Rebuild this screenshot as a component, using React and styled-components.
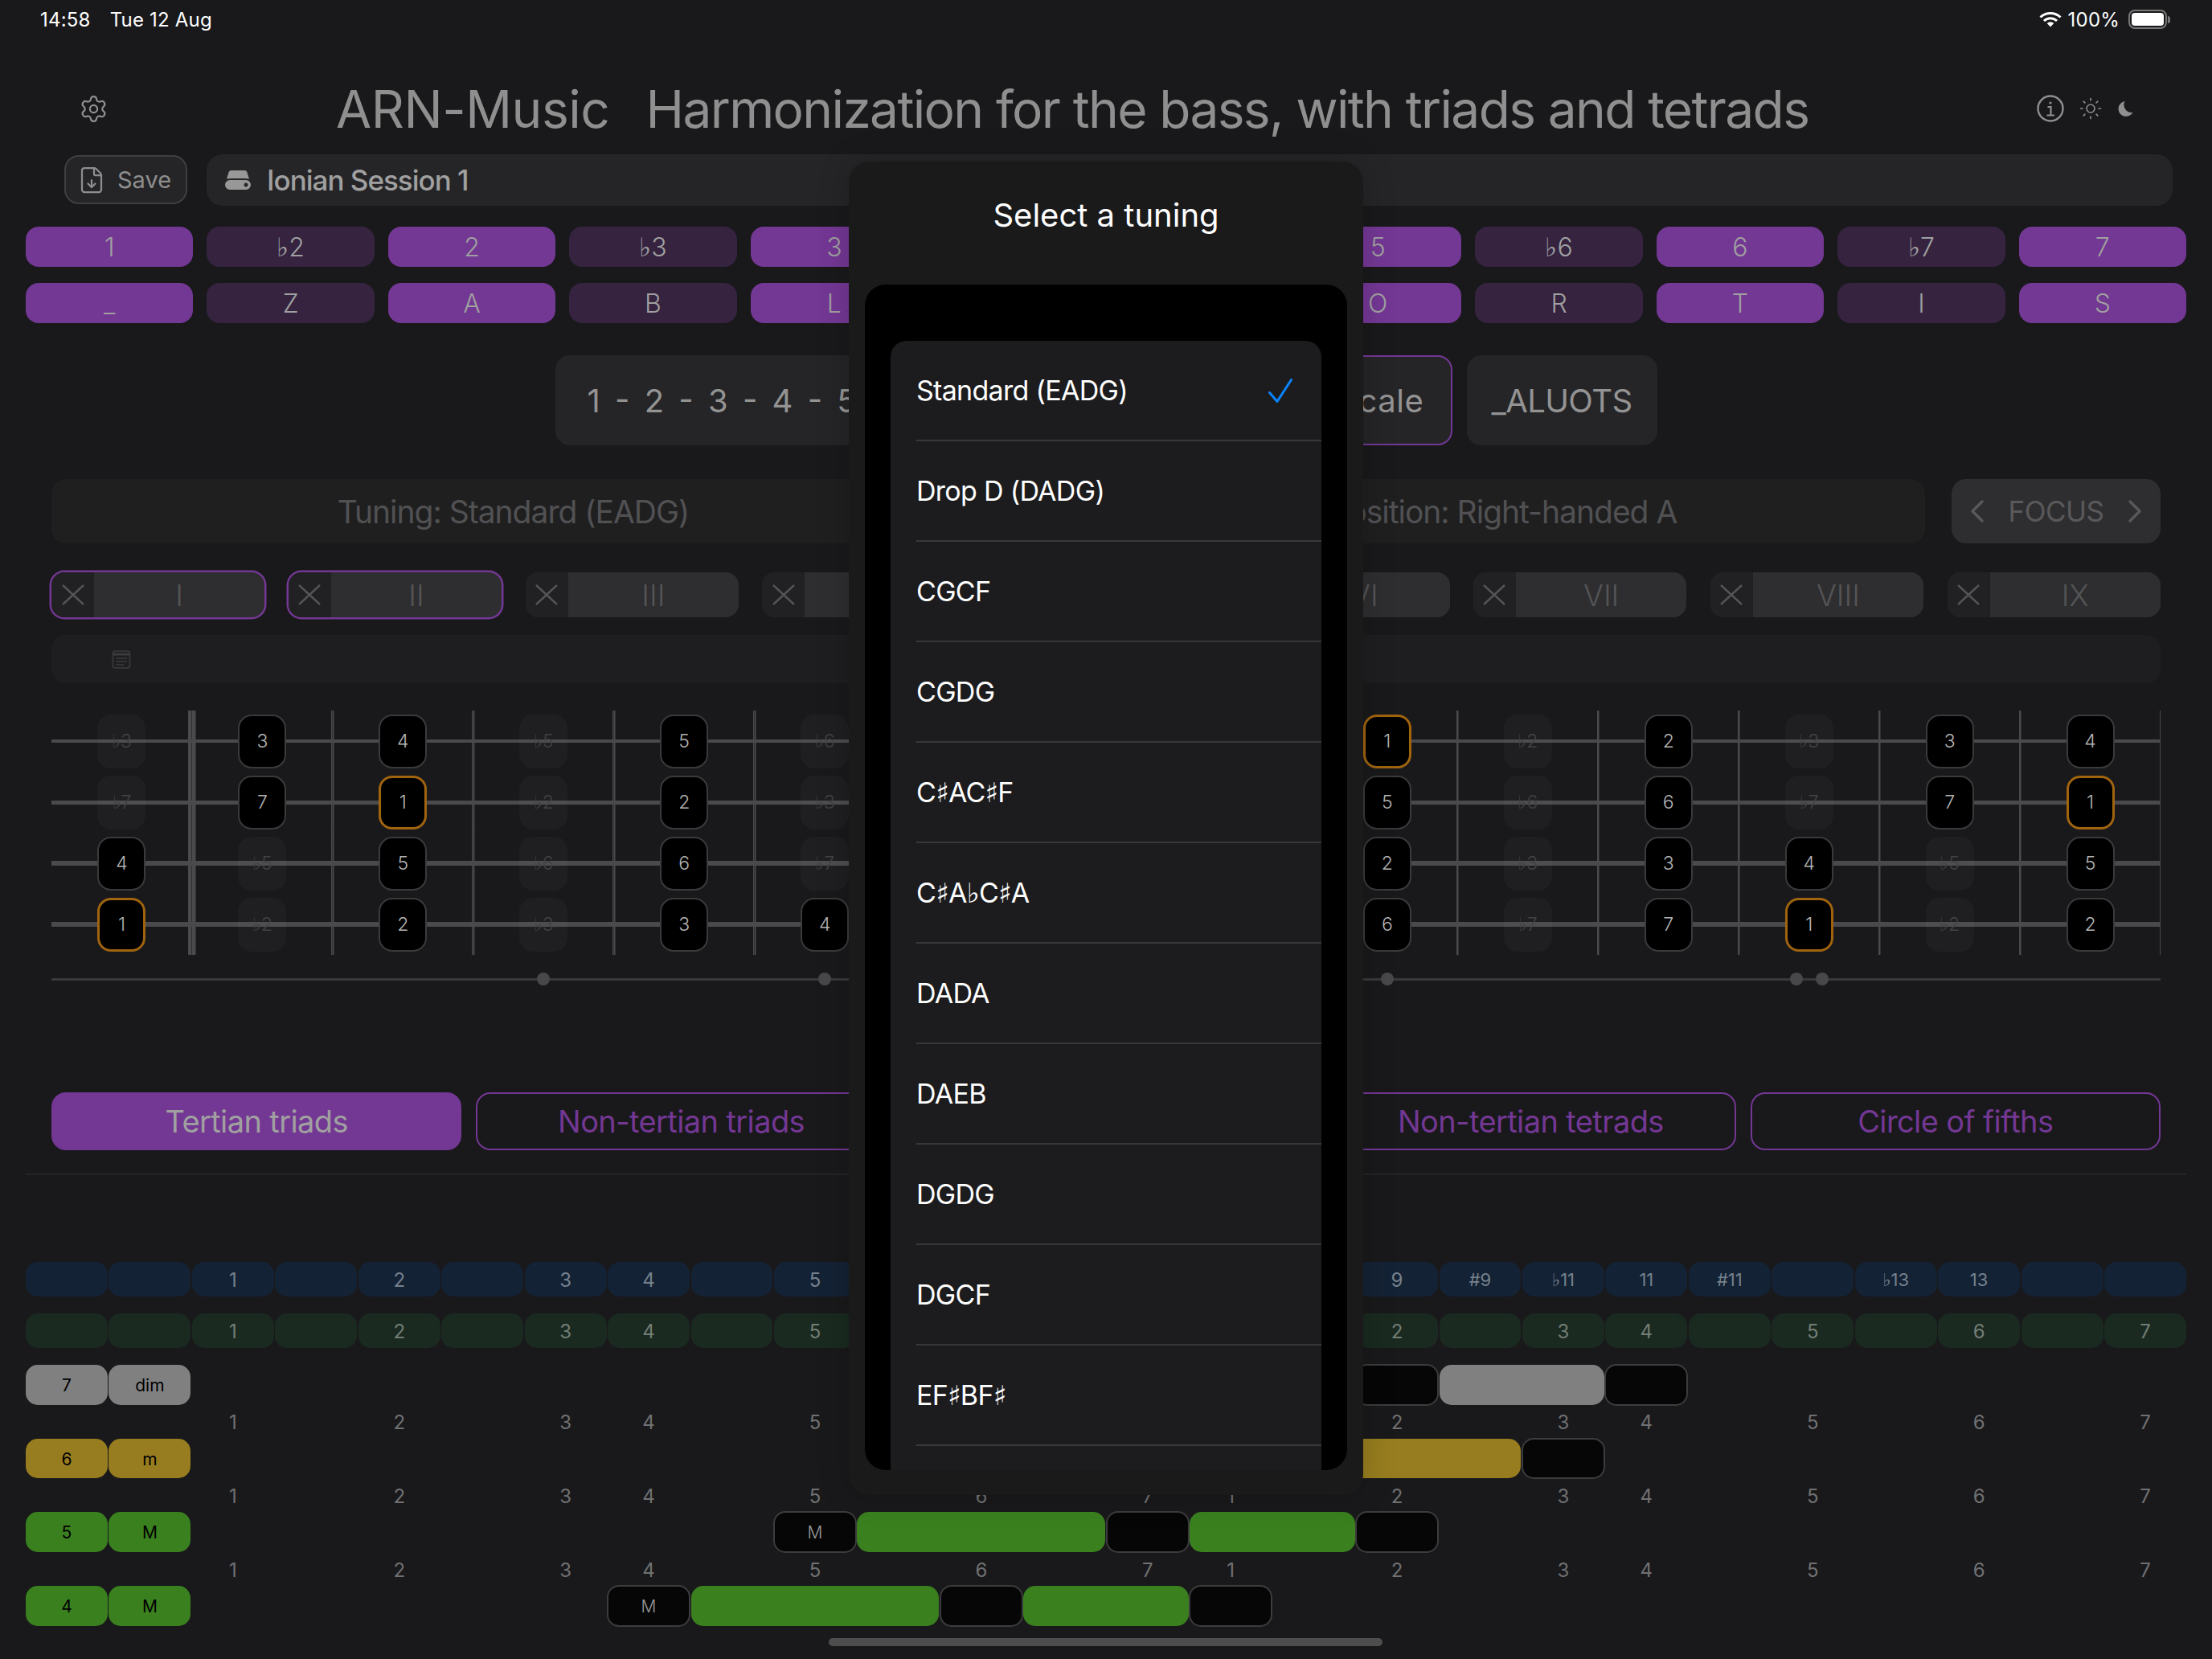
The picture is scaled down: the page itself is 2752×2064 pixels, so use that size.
import React from 'react';
import styled, { createGlobalStyle } from 'styled-components';
import { Settings, FileDown, Sun } from 'lucide-react';

const FONT = `Inter, "Noto Sans", "DejaVu Sans", sans-serif`;
const PURPLE = '#733794';

const Global = createGlobalStyle`
  html, body { margin: 0; padding: 0; background: #19191b; }
  * { box-sizing: border-box; }
  #root { width: 2752px; height: 2064px; overflow: hidden; }
`;

const Page = styled.div`
  position: relative;
  width: 2752px;
  height: 2064px;
  background: #19191b;
  font-family: ${FONT};
  display: flex;
  flex-direction: column;
  overflow: hidden;
`;

const StatusBar = styled.div`
  height: 48px;
  padding: 0 52px 0 50px;
  display: flex;
  align-items: center;
  justify-content: space-between;
  color: #fff;
  font-size: 24px;
  letter-spacing: 0.2px;
`;
const StatusLeft = styled.div`
  display: flex;
  gap: 24px;
`;
const StatusRight = styled.div`
  display: flex;
  align-items: center;
  gap: 8px;
`;
const Battery = styled.div`
  width: 48px;
  height: 24px;
  border: 2px solid #777;
  border-radius: 8px;
  padding: 2px;
  margin-left: 3px;
  display: flex;
  &::before { content: ''; flex: 1; background: #fff; border-radius: 4px; }
`;
const BatteryNub = styled.div`
  width: 3px;
  height: 9px;
  background: #777;
  border-radius: 0 3px 3px 0;
  margin-left: -7px;
`;

const Header = styled.header`
  height: 74px;
  margin-top: 50px;
  padding: 0 98px;
  display: flex;
  align-items: center;
  color: #8f8f8f;
`;
const GearSlot = styled.div`
  width: 37px;
  display: flex;
  justify-content: center;
`;
const Title = styled.h1`
  margin: 0 0 0 283px;
  font-weight: 400;
  font-size: 64px;
  display: flex;
  gap: 45px;
  white-space: nowrap;
`;
const TitleBrand = styled.span`
  letter-spacing: -0.45px;
`;
const TitleText = styled.span`
  letter-spacing: -1.63px;
`;
const HeaderIcons = styled.div`
  margin-left: auto;
  display: flex;
  align-items: center;
  gap: 18px;
`;

const SessionRow = styled.div`
  margin-top: 20px;
  padding: 0 49px 0 80px;
  display: flex;
  gap: 24px;
  height: 64px;
`;
const SaveButton = styled.div`
  width: 153px;
  height: 61px;
  margin-top: 1px;
  border: 2px solid #3f3f41;
  border-radius: 18px;
  background: #252527;
  color: #8e8e8e;
  font-size: 29px;
  display: flex;
  align-items: center;
  padding-left: 14px;
  gap: 14px;
`;
const SessionBar = styled.div`
  flex: 1;
  background: #252527;
  border-radius: 20px;
  display: flex;
  align-items: center;
  padding-left: 23px;
  gap: 20px;
  color: #a0a0a0;
  font-size: 35px;
  font-weight: 500;
  letter-spacing: -1px;
`;

const ChipGrid = styled.div`
  display: grid;
  grid-template-columns: repeat(12, 1fr);
  column-gap: 17px;
  margin: ${p => p.$top}px 32px 0;
`;
const Chip = styled.div`
  height: 50px;
  border-radius: 16px;
  background: ${p => (p.$on ? PURPLE : '#352340')};
  color: #a0a0a0;
  font-size: 32px;
  font-weight: 300;
  display: flex;
  align-items: center;
  justify-content: center;
`;

const ScaleRow = styled.div`
  margin-top: 40px;
  display: flex;
  justify-content: center;
  align-items: center;
  height: 112px;
  gap: 18px;
`;
const ScaleBox = styled.div`
  width: ${p => p.$w}px;
  height: 112px;
  border-radius: 18px;
  background: #252527;
  color: #939393;
  font-size: 40px;
  letter-spacing: ${p => p.$ls || 0}px;
  word-spacing: ${p => p.$ws || 0}px;
  display: flex;
  align-items: center;
  padding: 0 ${p => p.$pad || 0}px;
  justify-content: ${p => p.$align || 'center'};
  border: ${p => (p.$sel ? `2px solid ${PURPLE}` : 'none')};
`;

const TuningRow = styled.div`
  margin: 42px 64px 0;
  display: flex;
  gap: 33px;
  height: 80px;
`;
const TuningBar = styled.div`
  width: ${p => (p.$w ? `${p.$w}px` : 'auto')};
  flex: ${p => (p.$w ? 'none' : 1)};
  padding-left: ${p => p.$pad || 0}px;
  background: #1f1f20;
  border-radius: 18px;
  color: #515153;
  font-size: 39px;
  letter-spacing: -1px;
  display: flex;
  align-items: center;
  justify-content: center;
`;
const FocusButton = styled.div`
  width: 260px;
  background: #2e2e30;
  border-radius: 18px;
  color: #59595b;
  font-size: 35px;
  letter-spacing: -0.5px;
  display: flex;
  align-items: center;
  justify-content: space-between;
  padding: 0 23px;
`;

const PositionRow = styled.div`
  margin: 36px 64px 0;
  display: grid;
  grid-template-columns: repeat(9, 1fr);
  column-gap: 29.4px;
`;
const Position = styled.div`
  height: 56px;
  border-radius: 16px;
  background: #2e2e30;
  color: #545456;
  display: flex;
  overflow: hidden;
  font-size: 37px;
  font-weight: 300;
  box-shadow: ${p => (p.$sel ? `0 0 0 2.5px ${PURPLE}` : 'none')};
`;
const PositionX = styled.div`
  width: 53px;
  background: #212123;
  display: flex;
  align-items: center;
  justify-content: center;
`;
const PositionName = styled.div`
  flex: 1;
  display: flex;
  align-items: center;
  justify-content: center;
`;

const InfoStrip = styled.div`
  margin: 22px 64px 0;
  height: 60px;
  background: #1e1e20;
  border-radius: 18px;
  display: flex;
  align-items: center;
  padding-left: 75px;
`;

const Fretboard = styled.div`
  margin: 34px 64px 0;
  display: grid;
  grid-template-columns: repeat(15, 1fr);
  grid-auto-rows: 76px;
`;
const FretCell = styled.div`
  display: flex;
  align-items: center;
  justify-content: center;
  background:
    linear-gradient(#4a4a4c, #4a4a4c) left / ${p => (p.$col === 0 ? 0 : p.$col === 1 ? 4.5 : 1.5)}px 100% no-repeat,
    linear-gradient(#4a4a4c, #4a4a4c) right / ${p => (p.$col === 0 ? 4.5 : 1.5)}px 100% no-repeat,
    linear-gradient(#4a4a4c, #4a4a4c) center / 100% ${p => p.$thick}px no-repeat;
`;
const Note = styled.div`
  width: 60px;
  height: 67px;
  border-radius: 17px;
  font-size: 23px;
  font-weight: 300;
  display: flex;
  align-items: center;
  justify-content: center;
  color: ${p => (p.$on ? '#b4b4b4' : '#424244')};
  background: ${p => (p.$on ? '#000' : 'rgba(255,255,255,0.028)')};
  border: ${p => (p.$root ? '3px solid #a0640f' : p.$on ? '2px solid #3a3a3c' : 'none')};
`;
const MarkerRow = styled.div`
  margin: 22px 64px 0;
  height: 16px;
  display: grid;
  grid-template-columns: repeat(15, 1fr);
  background: linear-gradient(#39393b, #39393b) center / 100% 3px no-repeat;
`;
const MarkerCell = styled.div`
  display: flex;
  justify-content: center;
  gap: 16px;
`;
const Dot = styled.div`
  width: 16px;
  height: 16px;
  border-radius: 50%;
  background: #48484a;
`;

const Tabs = styled.div`
  margin: 133px 64px 0;
  display: grid;
  grid-template-columns: repeat(5, 1fr);
  column-gap: 18px;
`;
const Tab = styled.div`
  height: 72px;
  border-radius: 18px;
  border: 2px solid ${PURPLE};
  background: ${p => (p.$on ? PURPLE : 'transparent')};
  color: ${p => (p.$on ? '#a0a0a0' : PURPLE)};
  font-size: 38px;
  letter-spacing: -0.6px;
  display: flex;
  align-items: center;
  justify-content: center;
`;
const Divider = styled.div`
  margin: 29px 32px 0;
  height: 2px;
  background: #252527;
`;

const Table = styled.div`
  margin: 108px 32px 0;
  display: flex;
  flex-direction: column;
`;
const TableRow = styled.div`
  display: grid;
  grid-template-columns: repeat(26, 1fr);
  grid-template-rows: 1fr;
  column-gap: 1.5px;
  height: ${p => p.$h}px;
  margin-bottom: ${p => p.$mb || 0}px;
`;
const RefCell = styled.div`
  border-radius: 15px;
  background: ${p => p.$bg};
  color: ${p => p.$fg};
  font-size: ${p => p.$size || 24}px;
  padding-top: 1px;
  display: flex;
  align-items: center;
  justify-content: center;
`;
const DegreeLabel = styled.div`
  grid-column: ${p => p.$col + 1};
  grid-row: 1;
  color: #707072;
  font-size: 24px;
  padding-top: 2px;
  display: flex;
  align-items: center;
  justify-content: center;
`;
const HeadCell = styled.div`
  grid-column: ${p => p.$col + 1};
  grid-row: 1;
  border-radius: 15px;
  background: ${p => p.$bg};
  color: #000;
  font-size: 21px;
  padding-top: 1px;
  display: flex;
  align-items: center;
  justify-content: center;
`;
const Span = styled.div`
  grid-column: ${p => p.$col + 1} / span ${p => p.$span};
  grid-row: 1;
  border-radius: 15px;
  background: ${p => p.$bg};
`;
const ToneCell = styled.div`
  grid-column: ${p => p.$col + 1};
  grid-row: 1;
  margin: -1px;
  border-radius: 15px;
  background: #060606;
  border: 2px solid #3c3c3e;
  color: #9a9a9a;
  font-size: 21px;
  font-weight: 300;
  padding-top: 1px;
  display: flex;
  align-items: center;
  justify-content: center;
`;

const HomeIndicator = styled.div`
  position: absolute;
  left: 1031px;
  top: 2038px;
  width: 689px;
  height: 10px;
  border-radius: 5px;
  background: #4d4d4d;
`;

const Modal = styled.div`
  position: absolute;
  left: 1056px;
  top: 201px;
  width: 640px;
  height: 1659px;
  background: #1a1a1b;
  border-radius: 26px;
  box-shadow: 0 0 40px rgba(0, 0, 0, 0.18);
  display: flex;
  flex-direction: column;
  padding: 0 20px 31px;
`;
const ModalTitle = styled.div`
  height: 153px;
  flex: none;
  display: flex;
  justify-content: center;
  padding-top: 42px;
  color: #fff;
  font-size: 40px;
  line-height: 50px;
`;
const ModalPanel = styled.div`
  flex: 1;
  min-height: 0;
  background: #000;
  border-radius: 26px;
  padding: 70px 32px 0;
  overflow: hidden;
`;
const OptionCard = styled.div`
  height: 100%;
  background: #1c1c1e;
  border-radius: 20px 20px 0 0;
  overflow: hidden;
  padding-left: 32px;
`;
const OptionRow = styled.div`
  height: 125px;
  border-bottom: 2px solid #38383a;
  display: flex;
  align-items: center;
  justify-content: space-between;
  padding-right: 36px;
  color: #fff;
  font-size: 34px;
  letter-spacing: -0.7px;
`;

const strings = [
  { thick: 4, notes: ['♭3','3','4','♭5','5','♭6','6','♭7','7','1','♭2','2','♭3','3','4'] },
  { thick: 5, notes: ['♭7','7','1','♭2','2','♭3','3','4','♭5','5','♭6','6','♭7','7','1'] },
  { thick: 6, notes: ['4','♭5','5','♭6','6','♭7','7','1','♭2','2','♭3','3','4','♭5','5'] },
  { thick: 6, notes: ['1','♭2','2','♭3','3','4','♭5','5','♭6','6','♭7','7','1','♭2','2'] },
];
const isOn = n => !n.startsWith('♭');

const row1 = ['1','♭2','2','♭3','3','4','♭5','5','♭6','6','♭7','7'];
const row2 = ['_','Z','A','B','L','U','X','O','R','T','I','S'];
const positions = ['I','II','III','IV','V','VI','VII','VIII','IX'];
const tabs = ['Tertian triads','Non-tertian triads','Tertian tetrads','Non-tertian tetrads','Circle of fifths'];
const blue = ['','','1','','2','','3','4','','5','','6','','7','','♭9','9','#9','♭11','11','#11','','♭13','13','',''];
const green = ['','','1','','2','','3','4','','5','','6','','7','1','','2','','3','4','','5','','6','','7'];
const tunings = ['Standard (EADG)','Drop D (DADG)','CGCF','CGDG','C♯AC♯F','C♯A♭C♯A','DADA','DAEB','DGDG','DGCF','EF♯BF♯'];

const chords = [
  { deg: '7', q: 'dim', bg: '#808080', tones: [[13,'dim'],[16,''],[19,'']], spans: [[14,2],[17,2]] },
  { deg: '6', q: 'm', bg: '#977d1f', tones: [[11,'m'],[14,''],[18,'']], spans: [[12,2],[15,3]] },
  { deg: '5', q: 'M', bg: '#3a801f', tones: [[9,'M'],[13,''],[16,'']], spans: [[10,3],[14,2]] },
  { deg: '4', q: 'M', bg: '#3a801f', tones: [[7,'M'],[11,''],[14,'']], spans: [[8,3],[12,2]] },
];

const Wifi = () => (
  <svg width="28" height="20" viewBox="0 0 28 20" fill="none" stroke="#fff" strokeWidth="3">
    <path d="M1.5 7.5A18 18 0 0 1 26.5 7.5" />
    <path d="M6 12A11.5 11.5 0 0 1 22 12" />
    <path d="M14 19.5L9.7 15a6 6 0 0 1 8.6 0Z" fill="#fff" stroke="none" />
  </svg>
);
const InfoIcon = () => (
  <svg width="34" height="34" viewBox="0 0 34 34" fill="none" stroke="#8f8f8f" strokeWidth="2.4">
    <circle cx="17" cy="17" r="15.5" />
    <circle cx="17" cy="10" r="1.6" fill="#8f8f8f" stroke="none" />
    <path d="M13.5 15H17.5V25M12.5 25.5H22" strokeWidth="2.2" />
  </svg>
);
const Moon = () => (
  <svg width="20" height="20" viewBox="0 0 21 21">
    <path d="M10 1A10 10 0 1 0 20.5 15.5A10 10 0 0 1 10 1Z" fill="#8f8f8f" />
  </svg>
);
const DriveIcon = () => (
  <svg width="32" height="24" viewBox="0 0 32 24" fill="#989898">
    <path d="M7.5 0H24.5Q26.5 0 27.3 2L30 10.5Q27 10 25 10H7Q5 10 2 10.5L4.7 2Q5.5 0 7.5 0Z" />
    <path fillRule="evenodd" d="M6 12H26A6 6 0 0 1 26 24H6A6 6 0 0 1 6 12ZM26 15.5a2.5 2.5 0 1 0 0.01 0Z" />
  </svg>
);
const NoteIcon = () => (
  <svg width="24" height="23" viewBox="0 0 24 23" fill="none" stroke="#3b3b3d" strokeWidth="1.6">
    <rect x="1.5" y="1" width="21" height="21" rx="3" />
    <path d="M1.5 5H22.5" strokeWidth="3" />
    <path d="M5 10H19M5 14H19M5 18H15" />
  </svg>
);
const XMark = () => (
  <svg width="28" height="26" viewBox="0 0 28 26" fill="none" stroke="#545456" strokeWidth="2.4">
    <path d="M1 1L27 25M27 1L1 25" />
  </svg>
);
const Chevron = ({ left }) => (
  <svg width="17" height="28" viewBox="0 0 17 28" fill="none" stroke="#59595b" strokeWidth="3.4" strokeLinecap="round" strokeLinejoin="round">
    <path d={left ? 'M15 2L3 14L15 26' : 'M2 2L14 14L2 26'} />
  </svg>
);
const Check = () => (
  <svg width="30" height="30" viewBox="0 0 30 30" fill="none" stroke="#0a84ff" strokeWidth="3" strokeLinecap="round" strokeLinejoin="round">
    <path d="M1.5 17.5L11 28.5L28.5 1.5" />
  </svg>
);

export default function App() {
  return (
    <Page>
      <Global />
      <StatusBar>
        <StatusLeft><span>14:58</span><span>Tue 12 Aug</span></StatusLeft>
        <StatusRight>
          <Wifi /><span>100%</span><Battery /><BatteryNub />
        </StatusRight>
      </StatusBar>
      <Header>
        <GearSlot><Settings size={43} strokeWidth={1.4} color="#8f8f8f" /></GearSlot>
        <Title><TitleBrand>ARN-Music</TitleBrand><TitleText>Harmonization for the bass, with triads and tetrads</TitleText></Title>
        <HeaderIcons>
          <InfoIcon />
          <Sun size={30} strokeWidth={1.3} color="#8f8f8f" />
          <Moon />
        </HeaderIcons>
      </Header>
      <SessionRow>
        <SaveButton><FileDown size={36} strokeWidth={1.5} color="#8e8e8e" />Save</SaveButton>
        <SessionBar><DriveIcon />Ionian Session 1</SessionBar>
      </SessionRow>
      <ChipGrid $top={26}>
        {row1.map((n, i) => <Chip key={i} $on={isOn(n)}>{n}</Chip>)}
      </ChipGrid>
      <ChipGrid $top={20}>
        {row2.map((n, i) => <Chip key={i} $on={isOn(row1[i])}>{n}</Chip>)}
      </ChipGrid>
      <ScaleRow>
        <ScaleBox $w={809} $pad={40} $ws={7} $align="flex-start">1 - 2 - 3 - 4 - 5 - 6 - 7</ScaleBox>
        <ScaleBox $w={289} $pad={33} $ls={0.6} $align="flex-end" $sel>Scale</ScaleBox>
        <ScaleBox $w={237} $ls={-0.6}>_ALUOTS</ScaleBox>
      </ScaleRow>
      <TuningRow>
        <TuningBar $w={1149}>Tuning: Standard (EADG)</TuningBar>
        <TuningBar $pad={99}>Position: Right-handed A</TuningBar>
        <FocusButton><Chevron left /><span>FOCUS</span><Chevron /></FocusButton>
      </TuningRow>
      <PositionRow>
        {positions.map((p, i) => (
          <Position key={p} $sel={i < 2}>
            <PositionX><XMark /></PositionX>
            <PositionName>{p}</PositionName>
          </Position>
        ))}
      </PositionRow>
      <InfoStrip><NoteIcon /></InfoStrip>
      <Fretboard>
        {strings.map((s, si) => s.notes.map((n, col) => (
          <FretCell key={`${si}-${col}`} $col={col} $thick={s.thick}>
            <Note $on={isOn(n)} $root={n === '1'}>{n}</Note>
          </FretCell>
        )))}
      </Fretboard>
      <MarkerRow>
        {Array.from({ length: 15 }, (_, i) => (
          <MarkerCell key={i}>
            {[3, 5, 7, 9].includes(i) && <Dot />}
            {i === 12 && <><Dot /><Dot /></>}
          </MarkerCell>
        ))}
      </MarkerRow>
      <Tabs>
        {tabs.map((t, i) => <Tab key={t} $on={i === 0}>{t}</Tab>)}
      </Tabs>
      <Divider />
      <Table>
        <TableRow $h={43} $mb={21}>
          {blue.map((b, i) => <RefCell key={i} $bg="#142235" $fg="#75818c" $size={b.length > 1 ? 22 : 24}>{b}</RefCell>)}
        </TableRow>
        <TableRow $h={43} $mb={21}>
          {green.map((g, i) => <RefCell key={i} $bg="#1a2a20" $fg="#727d75">{g}</RefCell>)}
        </TableRow>
        {chords.map((c, idx) => (
          <React.Fragment key={c.deg}>
            <TableRow $h={49.7}>
              <HeadCell $col={0} $bg={c.bg}>{c.deg}</HeadCell>
              <HeadCell $col={1} $bg={c.bg}>{c.q}</HeadCell>
              {c.tones.map(([col, label]) => <ToneCell key={col} $col={col}>{label}</ToneCell>)}
              {c.spans.map(([col, span]) => <Span key={col} $col={col} $span={span} $bg={c.bg} />)}
            </TableRow>
            {idx < 3 && (
              <TableRow $h={42}>
                {green.map((g, i) => g && <DegreeLabel key={i} $col={i}>{g}</DegreeLabel>)}
              </TableRow>
            )}
          </React.Fragment>
        ))}
      </Table>
      <HomeIndicator />
      <Modal>
        <ModalTitle>Select a tuning</ModalTitle>
        <ModalPanel>
          <OptionCard>
            {tunings.map((t, i) => (
              <OptionRow key={t}>{t}{i === 0 && <Check />}</OptionRow>
            ))}
          </OptionCard>
        </ModalPanel>
      </Modal>
    </Page>
  );
}
